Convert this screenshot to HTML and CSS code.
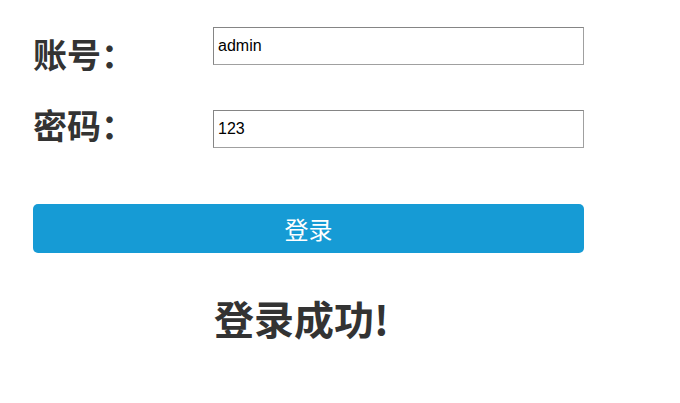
FILE: index.html
```html
<!DOCTYPE html>
<html>

<head>
    <title>login</title>
    <link rel="stylesheet" href="styles.css">
</head>

<body>
    <div class="login">
        <div class="row">
            <label class="label first">账号：</label>
            <input class="text" type="text" value="admin">
        </div>
        <div class="row">
            <label class="label second">密码：</label>
            <input class="text" type="text" value="123">
        </div>
        <button class="btn">登录</button>
        <p class="result">登录成功!</p>
    </div>
</body>

</html>
```

FILE: styles.css
```css
body {
    margin: 0;
    background: #fff;
    font-family: "Noto Sans CJK SC", "Noto Sans", sans-serif;
}

.login {
    width: 551px;
    padding: 27px 0 0 33px;
}

.row {
    display: flex;
    align-items: flex-start;
}

.row + .row {
    margin-top: 37px;
}

.label {
    width: 180px;
    font-size: 34px;
    font-weight: bold;
    line-height: 38px;
    color: #333;
}

.label.first {
    margin-top: 8px;
}

.label.second {
    margin-top: -4px;
}

.text {
    box-sizing: border-box;
    width: 371px;
    height: 38px;
    margin: 0;
    padding: 0 4px;
    border: 1px solid #858585;
    border-right-color: #a0a0a0;
    border-bottom-color: #a0a0a0;
    font-family: "Liberation Sans", Arial, sans-serif;
    font-size: 16px;
    color: #000;
    outline: none;
}

.btn {
    display: block;
    width: 551px;
    height: 49px;
    margin-top: 56px;
    border: none;
    border-radius: 5px;
    background-color: #169bd5;
    color: #fff;
    font-family: "Noto Sans CJK SC", sans-serif;
    font-size: 24px;
    cursor: pointer;
}

.result {
    margin: 41px 0 0 181px;
    font-size: 40px;
    font-weight: bold;
    line-height: 48px;
    color: #333;
}
```
